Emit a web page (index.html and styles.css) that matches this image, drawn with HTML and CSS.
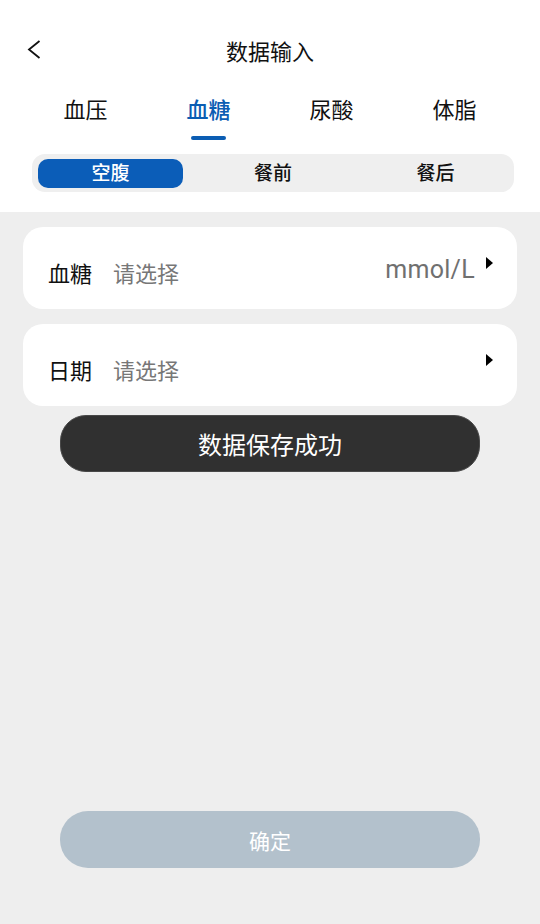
FILE: index.html
```html
<!DOCTYPE html>
<html lang="zh-CN">
<head>
    <meta charset="UTF-8">
    <meta name="viewport" content="width=device-width, initial-scale=1.0">
    <title>数据输入</title>
    <link rel="stylesheet" href="styles.css">
</head>
<body>
    <div class="page">
        <div class="top">
            <div class="navbar">
                <div class="back">
                    <svg width="14" height="19" viewBox="0 0 14 19">
                        <polyline points="12.5,1 2,9.5 12.5,18" fill="none" stroke="#111" stroke-width="1.8" stroke-linejoin="miter"/>
                    </svg>
                </div>
                <div class="title">数据输入</div>
                <div></div>
            </div>

            <div class="tabs">
                <div class="tab">血压</div>
                <div class="tab active">血糖</div>
                <div class="tab">尿酸</div>
                <div class="tab">体脂</div>
            </div>

            <div class="segment">
                <div class="seg-item on">空腹</div>
                <div class="seg-item">餐前</div>
                <div class="seg-item">餐后</div>
            </div>
        </div>

        <div class="content">
            <div class="field">
                <span class="label">血糖</span>
                <span class="placeholder">请选择</span>
                <span class="unit">mmol/L</span>
                <span class="arrow"></span>
            </div>
            <div class="field">
                <span class="label">日期</span>
                <span class="placeholder">请选择</span>
                <span class="unit"></span>
                <span class="arrow"></span>
            </div>

            <div class="toast">数据保存成功</div>

            <button class="confirm">确定</button>
        </div>
    </div>
</body>
</html>
```

FILE: styles.css
```css
body {
    margin: 0;
    padding: 0;
    background-color: #eeeeee;
    font-family: Roboto, "Noto Sans CJK SC", sans-serif;
    color: #111;
}

.page {
    width: 540px;
    height: 924px;
    display: flex;
    flex-direction: column;
}

.top {
    background-color: #fff;
    padding-bottom: 20px;
}

.navbar {
    display: grid;
    grid-template-columns: 1fr auto 1fr;
    padding-top: 30px;
    height: 46px;
}

.back {
    padding-left: 27px;
    padding-top: 10px;
}

.title {
    font-size: 22px;
    line-height: 46px;
    color: #111;
}

.tabs {
    display: grid;
    grid-template-columns: repeat(4, 1fr);
    margin: 20px 24px 0;
}

.tab {
    font-size: 22px;
    line-height: 30px;
    text-align: center;
    color: #111;
    display: flex;
    flex-direction: column;
    align-items: center;
}

.tab::after {
    content: "";
    width: 35px;
    height: 4px;
    margin-top: 10px;
    border-radius: 2px;
}

.tab.active {
    color: #0b5db3;
    font-weight: 500;
}

.tab.active::after {
    background-color: #0b5db3;
}

.segment {
    margin: 14px 26px 0 32px;
    height: 38px;
    box-sizing: border-box;
    padding: 5px 6px;
    background-color: #efefef;
    border-radius: 13px;
    display: flex;
    justify-content: space-between;
}

.seg-item {
    width: 145px;
    height: 29px;
    line-height: 29px;
    text-align: center;
    font-size: 19px;
    font-weight: 500;
    color: #111;
    border-radius: 10px;
}

.seg-item.on {
    background-color: #0b5db8;
    color: #fff;
}

.content {
    flex: 1;
    position: relative;
    display: flex;
    flex-direction: column;
    padding: 15px 23px 0;
}

.field {
    height: 82px;
    box-sizing: border-box;
    background-color: #fff;
    border-radius: 20px;
    margin-bottom: 15px;
    padding: 0 24px 0 25px;
    display: flex;
    align-items: center;
}

.label {
    font-size: 22px;
    margin-top: 8px;
    color: #111;
}

.placeholder {
    font-size: 22px;
    margin-top: 8px;
    margin-left: 21px;
    color: #777;
    flex: 1;
}

.unit {
    font-size: 25px;
    letter-spacing: 0.3px;
    color: #707070;
    margin-top: 2px;
}

.arrow {
    width: 0;
    height: 0;
    margin-left: 11px;
    margin-top: -10px;
    border-left: 7px solid #000;
    border-top: 6.5px solid transparent;
    border-bottom: 6.5px solid transparent;
}

/* toast sits over the form */
.toast {
    position: absolute;
    top: 203px;
    left: 60px;
    width: 420px;
    height: 57px;
    box-sizing: border-box;
    border: 1px solid #484848;
    background-color: #303030;
    border-radius: 26px;
    color: #fff;
    font-size: 24px;
    display: flex;
    justify-content: center;
    align-items: center;
}

.confirm {
    margin: auto 37px 56px;
    height: 57px;
    border: none;
    border-radius: 28px;
    background-color: #b3c1cc;
    color: #fff;
    font-family: "Noto Sans CJK SC", sans-serif;
    font-size: 21px;
}
```
